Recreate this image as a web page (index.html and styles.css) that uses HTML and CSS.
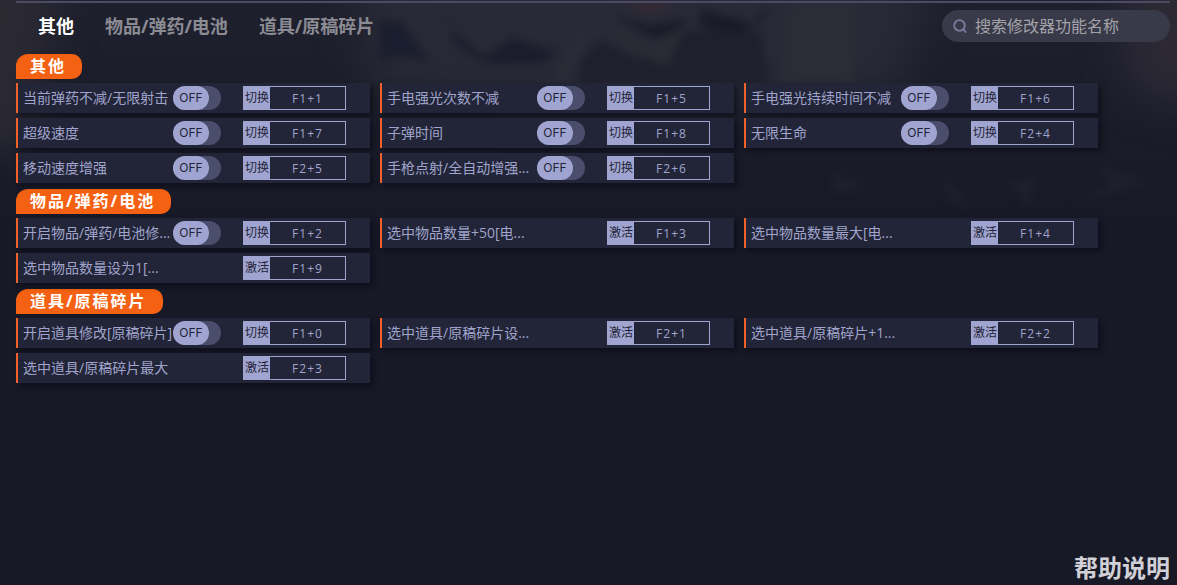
FILE: index.html
```
<!DOCTYPE html>
<html lang="zh-CN">
<head>
    <meta charset="UTF-8">
    <meta name="viewport" content="width=device-width, initial-scale=1.0">
    <title>修改器</title>
    <link rel="stylesheet" href="styles.css">
</head>
<body>
    <!-- dimmed artwork behind the top of the page -->
    <svg class="backdrop" viewBox="0 0 1177 260" preserveAspectRatio="none" aria-hidden="true">
        <defs>
            <filter id="soft" x="-10%" y="-10%" width="120%" height="120%" color-interpolation-filters="sRGB"><feGaussianBlur stdDeviation="4"/></filter>
            <filter id="wide" x="-20%" y="-20%" width="140%" height="140%" color-interpolation-filters="sRGB"><feGaussianBlur stdDeviation="22"/></filter>
        </defs>
        <g filter="url(#wide)">
            <path d="M-60 -40 H60 L30 150 H-60 Z" fill="#2b2a33"/>
            <path d="M350 -40 H930 L900 90 L640 110 L370 90 Z" fill="#292a36"/>
            <path d="M1120 -40 H1220 V110 L1130 90 Z" fill="#2d2a35"/>
        </g>
        <g filter="url(#soft)">
            <path d="M380 20 L402 22 L430 62 L400 56 L380 62 Z" fill="#1b1e2e"/>
            <path d="M440 0 L452 30 L486 58 L510 38 L560 52 L540 64 L486 64 L455 44 Z" fill="#1b1d2d"/>
            <path d="M610 14 L650 26 L690 18 L676 30 L654 38 L636 28 Z" fill="#191a28"/>
            <path d="M580 60 L600 40 L640 60 L690 30 L760 30 L770 84 H580 Z" fill="#1f202d"/>
            <path d="M700 10 L760 24 L770 6 L740 34 L700 26 Z" fill="#1a1b28"/>
            <path d="M590 16 L580 50 L566 82 H552 L574 46 Z" fill="#2c2c37"/>
            <path d="M604 24 L650 50 L684 26 L668 66 L640 56 Z" fill="#2a2b33"/>
            <path d="M620 0 H680 L650 14 Z" fill="#342a35"/>
            <path d="M790 0 H855 V84 H780 Z" fill="#2b2c36"/>
        </g>
        <g filter="url(#soft)" fill="#1f202d">
            <path d="M830 172 L870 186 L835 194 Z"/>
            <path d="M940 172 L970 206 L950 202 Z"/>
            <path d="M1000 186 L1036 178 L1026 210 L1018 190 Z"/>
            <path d="M1100 166 L1150 182 L1070 206 L1110 186 Z"/>
        </g>
    </svg>

    <header class="topbar">
        <nav class="tabs">
            <button class="tab active" type="button">其他</button>
            <button class="tab" type="button">物品/弹药/电池</button>
            <button class="tab" type="button">道具/原稿碎片</button>
        </nav>
        <label class="search">
            <svg class="search-icon" viewBox="0 0 14 14" aria-hidden="true">
                <circle cx="6.5" cy="6.5" r="5.3" fill="none" stroke="currentColor" stroke-width="1.8"/>
                <path d="M10.2 10.4 L12.6 13" fill="none" stroke="currentColor" stroke-width="1.8" stroke-linecap="round"/>
            </svg>
            <input class="search-input" type="text" placeholder="搜索修改器功能名称" aria-label="搜索修改器功能名称">
        </label>
    </header>

    <main id="groups" class="groups"></main>

    <footer class="footer">
        <a class="help" href="#help">帮助说明</a>
    </footer>

    <script>
        // toggle: on/off switch with a 切换 hotkey, otherwise a one-shot 激活 hotkey
        const groups = [
            { title: '其他', items: [
                { name: '当前弹药不减/无限射击', key: 'F1+1', toggle: true },
                { name: '手电强光次数不减', key: 'F1+5', toggle: true },
                { name: '手电强光持续时间不减', key: 'F1+6', toggle: true },
                { name: '超级速度', key: 'F1+7', toggle: true },
                { name: '子弹时间', key: 'F1+8', toggle: true },
                { name: '无限生命', key: 'F2+4', toggle: true },
                { name: '移动速度增强', key: 'F2+5', toggle: true },
                { name: '手枪点射/全自动增强...', key: 'F2+6', toggle: true }
            ] },
            { title: '物品/弹药/电池', items: [
                { name: '开启物品/弹药/电池修...', key: 'F1+2', toggle: true },
                { name: '选中物品数量+50[电...', key: 'F1+3' },
                { name: '选中物品数量最大[电...', key: 'F1+4' },
                { name: '选中物品数量设为1[...', key: 'F1+9' }
            ] },
            { title: '道具/原稿碎片', items: [
                { name: '开启道具修改[原稿碎片]', key: 'F1+0', toggle: true },
                { name: '选中道具/原稿碎片设...', key: 'F2+1' },
                { name: '选中道具/原稿碎片+1...', key: 'F2+2' },
                { name: '选中道具/原稿碎片最大', key: 'F2+3' }
            ] }
        ];

        function renderItem(item) {
            const toggle = item.toggle
                ? `<label class="switch"><input class="switch-input" type="checkbox" aria-label="${item.name}"><span class="switch-thumb">OFF</span></label>`
                : '';
            return `
                <div class="item">
                    <span class="item-name">${item.name}</span>
                    <div class="item-switch">${toggle}</div>
                    <div class="hotkey">
                        <button class="hotkey-btn" type="button">${item.toggle ? '切换' : '激活'}</button>
                        <input class="hotkey-input" type="text" value="${item.key}" aria-label="${item.name} 热键" readonly>
                    </div>
                </div>`;
        }

        document.getElementById('groups').innerHTML = groups.map(group => `
            <section class="group">
                <h2 class="group-title">${group.title}</h2>
                <div class="items">${group.items.map(renderItem).join('')}</div>
            </section>`).join('');

        document.querySelectorAll('.switch-input').forEach(input => {
            input.addEventListener('change', () => {
                input.nextElementSibling.textContent = input.checked ? 'ON' : 'OFF';
            });
        });

        document.querySelectorAll('.tab').forEach((tab, index) => {
            tab.addEventListener('click', () => {
                document.querySelector('.tab.active').classList.remove('active');
                tab.classList.add('active');
                document.querySelectorAll('.group')[index].scrollIntoView({ behavior: 'smooth' });
            });
        });
    </script>
</body>
</html>
```
FILE: styles.css
```
* { margin: 0; padding: 0; box-sizing: border-box; }
body {
    position: relative;
    min-height: 100vh;
    display: flex;
    flex-direction: column;
    padding: 1px 7px 0 16px;
    font-family: "Open Sans", "Noto Sans CJK SC", sans-serif;
    color: #a0a4cc;
    background: #171927 linear-gradient(#1f202d 0, #1a1c2a 130px, #171927 240px) no-repeat;
}
button, input { font-family: inherit; border: none; outline: none; }
button { cursor: pointer; }

.backdrop { position: absolute; top: 0; left: 0; z-index: -1; width: 100%; height: 260px; }

.topbar { display: flex; justify-content: space-between; align-items: center; height: 48px; padding-left: 22px; border-top: 2px solid #4b4a67; }
.tabs { display: flex; gap: 31px; }
.tab { background: none; color: #8b8b93; font-size: 18px; line-height: 26px; font-weight: 700; white-space: nowrap; }
.tab.active { color: #fff; }

.search { display: flex; align-items: center; gap: 8px; width: 228px; height: 32px; padding: 0 11px; border-radius: 16px; background: #393a49; color: #7e7c9e; }
.search-icon { width: 14px; height: 14px; flex-shrink: 0; }
.search-input { flex: 1; min-width: 0; background: none; color: #a2a2a8; font-size: 16px; line-height: 24px; }
.search-input::placeholder { color: #a2a2a8; opacity: 1; }

.groups { flex: 1; padding-top: 5px; }
.group { margin-bottom: 6px; }
.group-title { width: fit-content; height: 25px; margin-bottom: 4px; padding: 0 16px 0 14px; border-radius: 12px 10px 10px 0; background: #f46112; color: #fff; font-size: 16px; line-height: 25px; font-weight: 700; letter-spacing: 2px; }
.items { display: grid; grid-template-columns: repeat(auto-fill, 354px); gap: 5px 10px; }

.item { display: flex; align-items: center; height: 30px; padding: 0 24px 0 5px; border-left: 2px solid #f0622a; background: #222437; box-shadow: 3px 3px 5px rgba(8, 8, 16, 0.6); }
.item-name { width: 150px; font-size: 14px; line-height: 28px; white-space: nowrap; }
.item-switch { width: 48px; }
.switch { position: relative; display: flex; width: 48px; height: 24px; border-radius: 12px; background: #4a4d6b; cursor: pointer; }
.switch-input { position: absolute; inset: 0; opacity: 0; cursor: pointer; }
.switch-thumb { width: 36px; height: 24px; border-radius: 12px; background: #a0a4d0; color: #222437; font-family: Inter, sans-serif; font-size: 12px; line-height: 24px; text-align: center; pointer-events: none; }
.switch-input:checked + .switch-thumb { margin-left: auto; }

.hotkey { display: flex; width: 103px; height: 24px; margin-left: auto; border: 1px solid #a0a4d0; }
.hotkey-btn { width: 26px; flex-shrink: 0; background: #a0a4d0; color: #222437; font-size: 12px; line-height: 20px; white-space: nowrap; }
.hotkey-input { flex: 1; min-width: 0; background: none; color: #a0a4cc; font-size: 12px; letter-spacing: 1px; text-align: center; }

.footer { display: flex; justify-content: flex-end; }
.help { color: #d0d0d6; font-size: 24px; line-height: 34px; font-weight: 700; text-decoration: none; }
```
